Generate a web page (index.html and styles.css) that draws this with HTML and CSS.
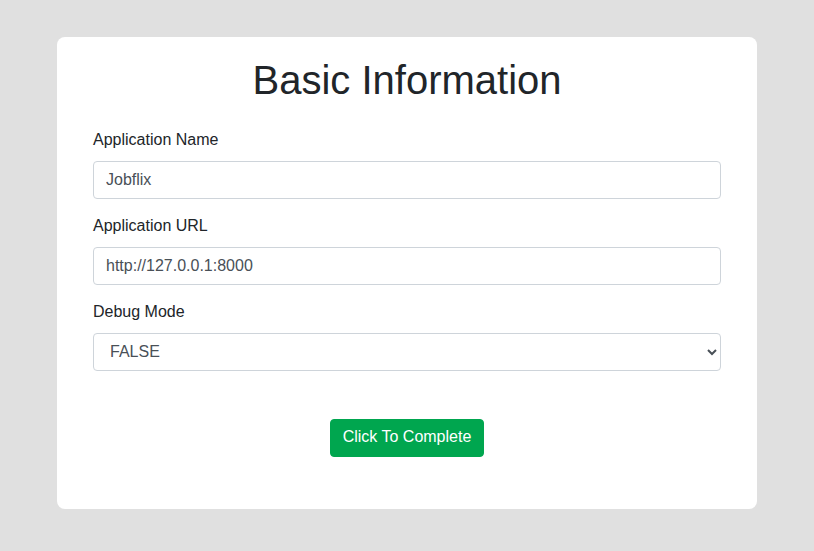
FILE: index.html
```html
<!DOCTYPE html>
<html lang="en">
<head>
<meta charset="utf-8">
<title>Basic Information</title>
<link rel="stylesheet" href="styles.css">
</head>
<body>
<div class="card">
  <h1 class="title">Basic Information</h1>
  <form class="form">
    <div class="form-group">
      <label class="label" for="app-name">Application Name</label>
      <input class="form-control" id="app-name" type="text" value="Jobflix">
    </div>
    <div class="form-group">
      <label class="label" for="app-url">Application URL</label>
      <input class="form-control" id="app-url" type="text" value="http://127.0.0.1:8000">
    </div>
    <div class="form-group">
      <label class="label" for="debug">Debug Mode</label>
      <select class="form-control select" id="debug">
        <option>FALSE</option>
        <option>TRUE</option>
      </select>
    </div>
    <div class="actions">
      <button class="btn" type="button">Click To Complete</button>
    </div>
  </form>
</div>
</body>
</html>
```
FILE: styles.css
```css
* { box-sizing: border-box; }
html, body {
  margin: 0;
  padding: 0;
}
body {
  background: #e0e0e0;
  font-family: "Liberation Sans", Arial, sans-serif;
  font-size: 16px;
  line-height: 1.5;
  color: #212529;
  padding-top: 37px;
}
.card {
  width: 700px;
  margin: 0 auto;
  background: #fff;
  border-radius: 8px;
  padding: 19px 36px 52px;
}
.title {
  margin: 0 0 25px;
  font-size: 40px;
  line-height: 48px;
  font-weight: 400;
  text-align: center;
  color: #212529;
}
.form { margin: 0; }
.form-group {
  margin-bottom: 16px;
}
.label {
  display: block;
  margin-bottom: 10px;
  line-height: 22px;
}
.form-control {
  display: block;
  width: 100%;
  height: 38px;
  padding: 6px 12px;
  font-family: "Liberation Sans", Arial, sans-serif;
  font-size: 16px;
  line-height: 1.5;
  color: #495057;
  background: #fff;
  border: 1px solid #ced4da;
  border-radius: 4px;
  outline: none;
}
.select {
  padding-top: 5px;
  padding-bottom: 7px;
}
.actions {
  display: flex;
  justify-content: center;
  padding-top: 32px;
}
.btn {
  font-family: "Liberation Sans", Arial, sans-serif;
  font-size: 16px;
  line-height: 24px;
  padding: 5px 12px 7px;
  border: 1px solid #00a64f;
  border-radius: 4px;
  background: #00a64f;
  color: #fff;
  cursor: pointer;
}
```
